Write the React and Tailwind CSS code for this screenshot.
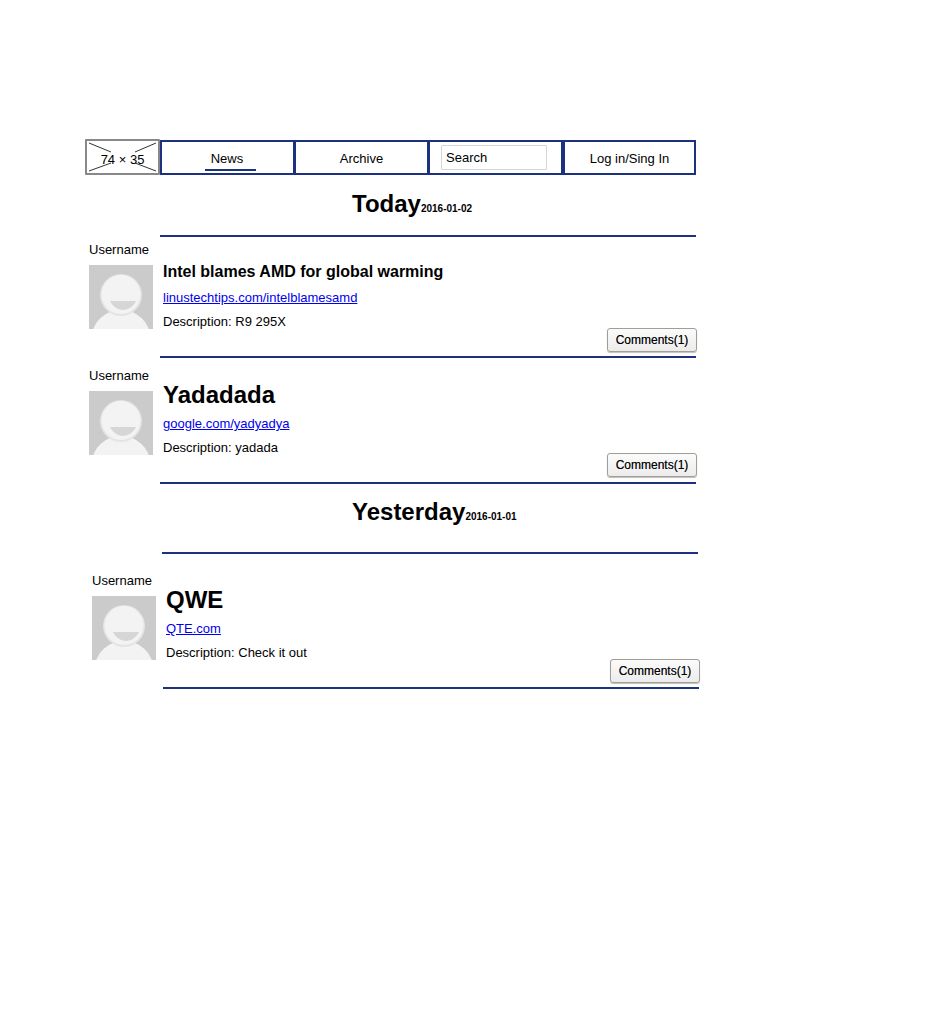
const posts = {
  today: [
    { title: "Intel blames AMD for global warming", small: true, link: "linustechtips.com/intelblamesamd", desc: "R9 295X" },
    { title: "Yadadada", link: "google.com/yadyadya", desc: "yadada", raised: true },
  ],
  yesterday: [{ title: "QWE", link: "QTE.com", desc: "Check it out" }],
};

function Avatar() {
  return (
    <svg width="64" height="64" viewBox="0 0 64 64" className="block shrink-0">
      <rect width="64" height="64" fill="#cbcbcb" />
      <ellipse cx="32" cy="72" rx="29" ry="27" fill="#f3f3f3" />
      <circle cx="32" cy="30" r="21" fill="#e4e4e4" />
      <circle cx="32" cy="29.500" r="19.500" fill="#f3f3f3" />
      <path d="M21 36 H47 C45 41 39 45 34 45 C29 45 23 41 21 36 Z" fill="#d6d6d6" />
    </svg>
  );
}

function Logo() {
  return (
    <div className="relative w-[75px] h-[36px] border-2 border-[#888] rounded-[1px] shrink-0 flex items-center justify-center">
      <svg width="71" height="32" viewBox="0 0 71 32" className="absolute inset-0">
        <path d="M2 2 L24 11 M69 2 L48 11 M2 30 L24 22 M69 30 L48 22" stroke="#333" strokeWidth="1" fill="none" />
      </svg>
      <span className="relative text-[13px] leading-none text-black mt-[4px]">74 × 35</span>
    </div>
  );
}

function NavBox({ className, children }) {
  return (
    <div className={`h-[35px] border-2 border-[#1c3180] flex items-center justify-center text-[13px] text-black ${className}`}>
      {children}
    </div>
  );
}

function Post({ post }) {
  return (
    <div>
      <div className="ml-[4px] text-[13px] leading-4 text-black">Username</div>
      <div className="mt-[7px] ml-[4px] flex gap-[10px]">
        <Avatar />
        <div className="flex flex-col">
          {post.small ? (
            <h3 className="text-base leading-4 -mt-[1px] mb-[1px] font-bold text-black">{post.title}</h3>
          ) : (
            <h2 className="text-2xl leading-4 -mt-[4px] mb-[4px] font-bold text-black">{post.title}</h2>
          )}
          <a href="#" className="mt-[9px] text-[13px] leading-4 text-[#0000ee] underline">{post.link}</a>
          <p className="mt-[8px] -mb-[1px] text-[13px] leading-4 text-black">Description: {post.desc}</p>
        </div>
      </div>
      <div className={`w-[612px] flex justify-end ${post.raised ? "-mt-[2px]" : "-mt-[1px]"}`}>
        <button className="w-[90px] h-[24px] rounded-[3px] border border-[#a39d92] bg-gradient-to-b from-[#fbfbfb] to-[#ececec] text-xs text-black shadow-[0_1px_1px_rgba(0,0,0,0.25)] [text-shadow:0_0_0.5px_rgba(0,0,0,0.5)]">
          Comments(1)
        </button>
      </div>
      <div className={`ml-[75px] w-[536px] h-[2px] bg-[#1c3180] ${post.raised ? "mt-[5px]" : "mt-[4px]"}`} />
    </div>
  );
}

function DayHeading({ label, date }) {
  return (
    <div className="ml-[267px] flex items-baseline text-black">
      <span className="text-2xl leading-7 font-bold">{label}</span>
      <span className="text-[10px] leading-none font-bold">{date}</span>
    </div>
  );
}

export default function App() {
  return (
    <div className="bg-white min-h-[1011px] pt-[139px] pl-[85px] font-['Liberation_Sans',Arial,sans-serif]">
      <nav className="flex">
        <Logo />
        <NavBox className="w-[135px] mt-[1px]">
          <span className="border-b-2 border-[#1c3180] w-[51px] pr-[6px] text-center h-[27px] leading-[29px] -mt-[1px] ml-[5px]">News</span>
        </NavBox>
        <NavBox className="w-[135px] mt-[1px] -ml-[1px] pt-[2px]">Archive</NavBox>
        <NavBox className="w-[135px] mt-[1px] -ml-[1px]">
          <input readOnly value="Search" className="w-[106px] h-[25px] border border-[#d5d6dc] rounded-[1px] px-[4px] text-[13px] text-black -mt-[1px] -ml-[3px]" />
        </NavBox>
        <NavBox className="w-[133px] mt-[1px] pt-[2px]">Log in/Sing In</NavBox>
      </nav>

      <div className="mt-[15px]">
        <DayHeading label="Today" date="2016-01-02" />
      </div>
      <div className="ml-[75px] mt-[17px] w-[536px] h-[2px] bg-[#1c3180]" />

      <div className="mt-[5px]">
        <Post post={posts.today[0]} />
      </div>
      <div className="mt-[10px]">
        <Post post={posts.today[1]} />
      </div>

      <div className="mt-[14px]">
        <DayHeading label="Yesterday" date="2016-01-01" />
      </div>

      <div className="ml-[77px] mt-[26px] w-[536px] h-[2px] bg-[#1c3180]" />
      <div className="ml-[3px] mt-[19px]">
        <Post post={posts.yesterday[0]} />
      </div>
    </div>
  );
}
